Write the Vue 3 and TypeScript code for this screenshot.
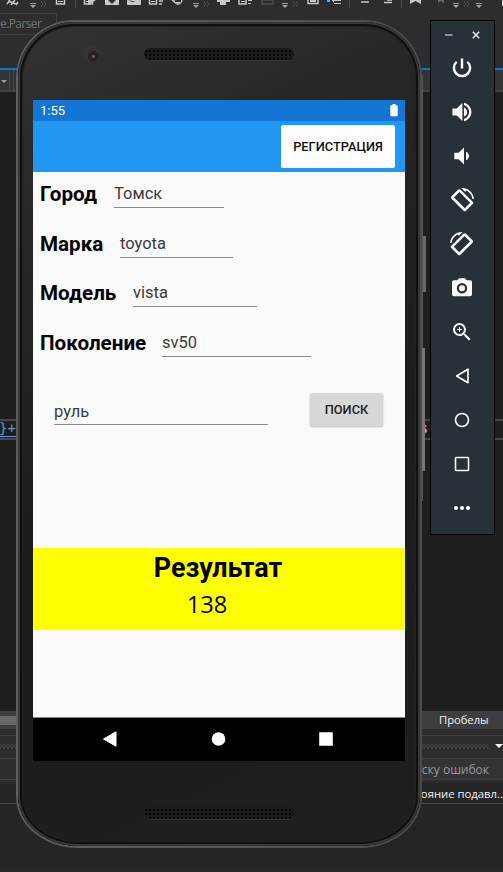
<script setup lang="ts">
interface Field {
  label: string
  value: string
  gap: number
  width: number
}

interface Tool {
  name: string
  kind: 'fill' | 'line'
  d: string
  flip?: boolean
}

const fields: Field[] = [
  { label: 'Город', value: 'Томск', gap: 114, width: 110 },
  { label: 'Марка', value: 'toyota', gap: 120, width: 113 },
  { label: 'Модель', value: 'vista', gap: 133, width: 124 },
  { label: 'Поколение', value: 'sv50', gap: 162, width: 149 },
]

const rotate =
  'M16.48 2.52c3.27 1.55 5.61 4.72 5.97 8.48h1.5C23.44 4.84 18.29 0 12 0l-.66.03 3.81 3.81 1.33-1.32zM10.6 1.75c-.8-.8-1.9-.8-2.6 0L1.5 8.3c-.7.7-.7 1.7 0 2.4l12 12c.7.7 1.8.7 2.5 0l6.7-6.7c.7-.7.7-1.6 0-2.3zM14.8 20.2L4 9.4l5.4-5.4 10.8 10.8z'

const tools: Tool[] = [
  { name: 'power', kind: 'fill', d: 'M13.2 2.6h-2.4v10h2.4zM18 4.9l-1.6 1.6A6.9 6.9 0 1 1 7.6 6.5L6 4.9a9.3 9.3 0 1 0 12 0z' },
  { name: 'volume-up', kind: 'fill', d: 'M2.4 8.5v7h4.4l5.6 5.6V2.9L6.8 8.5zM17.2 12c0-1.9-1.1-3.6-3.2-4.6v9.2c2.1-1 3.2-2.7 3.2-4.6zM14 2.8v2.3c3 .9 5.1 3.6 5.1 6.9s-2.1 6-5.1 6.9v2.3c4.2-1 7.4-4.7 7.4-9.2S18.2 3.8 14 2.8z' },
  { name: 'volume-down', kind: 'fill', d: 'M4.3 8.8v6.4h4.3l5.4 5.4V3.4L8.6 8.8zM19 12c0-1.8-1-3.3-3-4.2v8.4c2-.9 3-2.4 3-4.2z' },
  { name: 'rotate-left', kind: 'fill', d: rotate },
  { name: 'rotate-right', kind: 'fill', d: rotate, flip: true },
  { name: 'camera', kind: 'fill', d: 'M9 2.2L7.2 4.2H4c-1.1 0-2 .9-2 2v12c0 1.1.9 2 2 2h16c1.1 0 2-.9 2-2v-12c0-1.1-.9-2-2-2h-3.2L15 2.2zm3 15.2a5.2 5.2 0 1 1 0-10.4 5.2 5.2 0 0 1 0 10.4zm0-2.2a3 3 0 1 0 0-6 3 3 0 0 0 0 6z' },
  { name: 'zoom', kind: 'fill', d: 'M15.5 14h-.79l-.28-.27A6.471 6.471 0 0 0 16 9.5 6.5 6.5 0 1 0 9.5 16c1.61 0 3.09-.59 4.23-1.57l.27.28v.79l5 4.99L20.49 19zm-6 0C7.01 14 5 11.99 5 9.5S7.01 5 9.5 5 14 7.01 14 9.5 11.99 14 9.5 14zm2.5-4h-2v2H9v-2H7V9h2V7h1v2h2z' },
  { name: 'back', kind: 'line', d: 'M18 5.2v13.6L6.6 12z' },
  { name: 'home', kind: 'line', d: 'M12 5.5a6.5 6.5 0 1 0 0 13 6.5 6.5 0 0 0 0-13z' },
  { name: 'overview', kind: 'line', d: 'M6.3 5.5h11.4q.8 0 .8.8v11.4q0 .8-.8.8H6.3q-.8 0-.8-.8V6.3q0-.8.8-.8z' },
  { name: 'more', kind: 'fill', d: 'M6 10a2 2 0 1 0 0 4 2 2 0 0 0 0-4zM12 10a2 2 0 1 0 0 4 2 2 0 0 0 0-4zM18 10a2 2 0 1 0 0 4 2 2 0 0 0 0-4z' },
]
</script>

<template>
  <div class="desktop">
    <div class="ide">
      <div class="ide-top">
        <svg class="ide-icons" width="503" height="10" viewBox="0 0 503 10">
          <g fill="none" stroke="#c8c8c8" stroke-width="1.5">
            <path d="M7 4l3-4M11 5l4-5M16 5l2-3M8 1l8 3M56.5 0v4h8V0M84.5 0v4h8V0M149.5 0v4h7V0M159 1h4M159 4h3M239 0v4h7V0M308 0v3.5h10V0M333 1.5h1M361 2h8M387 0h5M384 2.5h8" />
            <path d="M172 0q5 5 10 1" />
          </g>
          <g fill="#c8c8c8">
            <path d="M58 1h5v1h-5zM86 1h5v1h-5zM151 1h4v1h-4zM241 1h4v1h-4zM310 0h6v2h-6zM248 0h4v1h-4zM248 3h3v1h-3z" />
            <path d="M88 5V0h8zM105 0h14v5h-14zM127 0h14v5h-14zM217 0h13v2h-4v3h-6V2h-3zM410 0h11v4l-5.5-3-5.5 3z" />
            <path d="M173 0h10q-2 5-5 5t-5-5z" opacity=".7" />
          </g>
          <path d="M108 0h8l-4 4zM128 0l4 2h4M175 0h6v2h-6z" fill="#2d2d30" />
          <g fill="#a0a0a0">
            <path d="M30 3h6v1h-6zM30 5h6l-3 3zM193 3h6v1h-6zM193 5h6l-3 3zM282 3h6v1h-6zM282 5h6l-3 3zM453 3h6v1h-6zM453 5h6l-3 3zM476 3h6v1h-6zM476 5h6l-3 3z" />
          </g>
          <path d="M262 0h11v4h-11z" fill="none" stroke="#5c5c60" />
          <path d="M438 0h6v3l-3-2-3 2z" fill="#68686c" />
          <path d="M75.5 0v8M349.5 0v8M401.5 0v8" stroke="#4a4a4f" />
          <path d="M327 0h3v2h-3z" fill="#55aaff" />
          <path d="M332 0h9v1h-9zM334 3h7v1h-7zM502 0h1v6h-1z" fill="#c8c8c8" />
          <path d="M41 2h5M42 4h5M41 6h5M204 2h5M205 4h5M204 6h5M293 2h5M294 4h5M293 6h5M464 2h5M465 4h5M464 6h5" stroke="#68686c" stroke-dasharray="1 2" />
        </svg>
        <div class="tab">e.Parser</div>
      </div>
      <div class="ide-nav"><span class="combo"><i class="caret"></i></span><span class="combo"></span></div>
      <div class="editor">
        <div class="code-line"><span>}+</span><b>s</b></div>
      </div>
      <div class="scroll-row"><div class="thumb"></div><span>Пробелы</span></div>
      <div class="panel-head"><div class="dots"></div><i class="caret bright"></i></div>
      <div class="panel-search">Поиск по списку ошибок</div>
      <div class="panel-cols">Состояние подавл..</div>
      <div class="ide-bottom"></div>
    </div>

    <div class="side-key long"></div>
    <div class="side-key power-key"></div>
    <div class="side-key volume-key"></div>
    <div class="phone">
      <div class="face">
        <div class="head">
          <div class="lens"></div>
          <div class="speaker"></div>
        </div>
        <div class="screen">
          <div class="status">
            <span>1:55</span>
            <svg width="8" height="13" viewBox="0 0 8 13"><path d="M2.5 0h3v1.3h1.2q1 0 1 1v9q0 1-1 1H1.3q-1 0-1-1v-9q0-1 1-1h1.2z" fill="#fff" /></svg>
          </div>
          <div class="appbar"><button class="register">РЕГИСТРАЦИЯ</button></div>
          <div class="page">
            <div v-for="f in fields" :key="f.label" class="field">
              <label :style="{ width: f.gap - 40 + 'px' }">{{ f.label }}</label>
              <div class="input" :style="{ width: f.width + 'px' }">{{ f.value }}</div>
            </div>
            <div class="search">
              <div class="input wide">руль</div>
              <button class="find">ПОИСК</button>
            </div>
            <div class="result">
              <h2>Результат</h2>
              <p>138</p>
            </div>
          </div>
          <div class="navbar">
            <svg width="16" height="16" viewBox="0 0 16 16"><path d="M14 .8v14.4L1.5 8z" fill="#fff" stroke="#fff" stroke-linejoin="round" /></svg>
            <svg width="16" height="16" viewBox="0 0 16 16"><circle cx="8.5" cy="8" r="6.8" fill="#fff" /></svg>
            <svg width="16" height="16" viewBox="0 0 16 16"><rect x="1.2" y="1.2" width="13.6" height="13.6" rx=".6" fill="#fff" /></svg>
          </div>
        </div>
        <div class="foot"><div class="speaker"></div></div>
      </div>
    </div>

    <div class="emulator">
      <div class="window-keys">
        <svg width="8" height="10" viewBox="0 0 8 10"><path d="M0 5h7.5" stroke="#a3adb2" stroke-width="1.6" /></svg>
        <svg width="8" height="10" viewBox="0 0 8 10"><path d="M.8 1.8l6.4 6.4M7.2 1.8L.8 8.2" stroke="#e6e9ea" stroke-width="1.5" /></svg>
      </div>
      <div v-for="t in tools" :key="t.name" class="tool">
        <svg width="24" height="24" viewBox="0 0 24 24" :class="[t.kind, { flip: t.flip }]"><path :d="t.d" fill-rule="evenodd" /></svg>
      </div>
    </div>
  </div>
</template>

<style>
body {
  margin: 0;
  background: #252526;
}
</style>

<style scoped>
.desktop {
  position: relative;
  width: 503px;
  height: 872px;
  overflow: hidden;
  font-family: Roboto, sans-serif;
}
.desktop * {
  box-sizing: border-box;
}
.ide {
  display: flex;
  flex-direction: column;
  height: 872px;
  background: #252526;
  font-family: "Open Sans", sans-serif;
  font-size: 12px;
  color: #f1f1f1;
}
.ide-top {
  height: 70px;
  background: #2d2d30;
  border-bottom: 2px solid #007acc;
}
.ide-icons {
  display: block;
}
.tab {
  width: 57px;
  height: 22px;
  margin-top: 3px;
  border: 1px solid #3f3f46;
  border-left: 0;
  color: #6e7472;
  font-size: 12px;
  letter-spacing: -0.6px;
  line-height: 20px;
}
.ide-nav {
  display: flex;
  gap: 3px;
  height: 22px;
  background: #333337;
  border-bottom: 2px solid #3f3f46;
}
.combo {
  width: 10px;
  border-right: 1px solid #46464c;
  padding: 10px 0 0 1px;
}
.combo + .combo {
  border: 0;
  border-left: 1px solid #46464c;
}
.caret {
  display: block;
  border: 3px solid transparent;
  border-top-color: #999;
  border-bottom: 0;
  width: 6px;
}
.editor {
  height: 619px;
  background: #1e1e1e;
  padding-top: 327px;
}
.code-line {
  display: flex;
  justify-content: space-between;
  height: 21px;
  padding-right: 75px;
  border: solid #464646;
  border-width: 2px 0;
  font-family: "DejaVu Sans Mono", monospace;
  font-size: 14px;
  line-height: 15px;
  color: #569cd6;
}
.code-line span {
  height: 16px;
  border-bottom: 1px solid #569cd6;
  margin-left: -1px;
}
.code-line b {
  color: #d69d85;
}
.scroll-row {
  display: flex;
  align-items: center;
  height: 18px;
  background: #3e3e42;
}
.scroll-row span {
  margin-top: -2px;
  font-size: 11.2px;
}
.thumb {
  width: 200px;
  height: 9px;
  background: #686868;
  margin-right: 239px;
}
.panel-head {
  display: flex;
  justify-content: space-between;
  height: 30px;
  border-bottom: 1px solid #3f3f46;
  padding: 15px 0 0;
  background: linear-gradient(#3f3f46, #3f3f46) 0 6px / 100% 1px no-repeat #2d2d30;
}
.dots {
  width: 488px;
  height: 5px;
  background:
    radial-gradient(circle, #515155 0.6px, transparent 0.9px) 0 0 / 4px 4px,
    radial-gradient(circle, #515155 0.6px, transparent 0.9px) 2px 2px / 4px 4px;
}
.caret.bright {
  border-width: 4px;
  border-bottom: 0;
  border-top-color: #f1f1f1;
  width: 8px;
}
.panel-search {
  height: 21px;
  background: linear-gradient(90deg, #2d2d30 50%, #333337 50%);
  border-bottom: 1px solid #3f3f46;
  color: #999;
  line-height: 21px;
  padding-right: 14px;
  text-align: right;
}
.panel-cols {
  height: 24px;
  background: linear-gradient(#2d2d30 3px, #252526 3px);
  border-bottom: 1px solid #46464c;
  line-height: 27px;
  text-align: right;
  font-size: 11.3px;
  white-space: nowrap;
}
.ide-bottom {
  flex: 1;
  background: #252526;
  border-bottom: 4px solid #2d2526;
}
.phone {
  position: absolute;
  left: 16px;
  top: 20px;
  width: 406px;
  height: 828px;
  padding: 2px;
  border-radius: 58px 58px 62px 62px / 58px 58px 52px 52px;
  background: linear-gradient(90deg, #625c5e, #4c4a4b);
}
.face {
  height: 824px;
  display: flex;
  flex-direction: column;
  align-items: center;
  border-radius: 56px 56px 60px 60px / 56px 56px 50px 50px;
  background: linear-gradient(155deg, #343434 0%, #272727 20%, #1c1c1c 55%, #1f1f1f 100%);
  box-shadow: inset 0 0 0 2px #383737, inset 0 0 0 4px #101010, inset 0 0 1px 5px #232323;
}
.head {
  display: flex;
  align-items: center;
  width: 372px;
  height: 78px;
  padding-bottom: 14px;
}
.lens {
  width: 16px;
  height: 16px;
  margin-left: 50px;
  border-radius: 50%;
  background: radial-gradient(circle at 65% 65%, #70585f 0 1px, #252027 2px 5px, #343434 6px);
}
.speaker {
  width: 150px;
  height: 13px;
  margin-left: 45px;
  border-radius: 7px;
  border-bottom: 1px solid #333;
  background: radial-gradient(circle, #050505 0.9px, transparent 1.2px) 0 1px / 4px 4px #1b1b1b;
}
.foot {
  flex: 1;
  width: 372px;
  padding-top: 46px;
}
.foot .speaker {
  margin-left: 111px;
}
.screen {
  width: 372px;
  height: 661px;
  background: #fafafa;
  color: #000;
}
.status {
  display: flex;
  align-items: center;
  justify-content: space-between;
  height: 21px;
  padding: 0 7px;
  background: #1476d4;
  color: #fff;
  font-size: 13px;
}
.appbar {
  display: flex;
  justify-content: flex-end;
  height: 51px;
  padding: 4px 10px 0 0;
  background: #2196f3;
}
.register {
  width: 114px;
  height: 43px;
  padding: 0;
  border: 0;
  border-radius: 2px;
  background: #fff;
  color: #111;
  font: 500 12.8px Roboto, sans-serif;
}
.page {
  display: flex;
  flex-direction: column;
  height: 546px;
  border-bottom: 1px solid #858585;
}
.field {
  display: flex;
  height: 49.6px;
  padding: 8px 0 0 7px;
}
.field label {
  font-weight: 700;
  font-size: 20.65px;
  line-height: 28px;
}
.input {
  height: 28px;
  border-bottom: 1px solid #8b8b8b;
  font-size: 16.5px;
  line-height: 28px;
  color: #3a3a3a;
}
.search {
  display: flex;
  justify-content: space-between;
  padding: 23px 22px 0 21px;
}
.input.wide {
  width: 214px;
  height: 30px;
  line-height: 33px;
  margin-top: 1.6px;
}
.find {
  width: 73px;
  height: 33px;
  border: 0;
  padding: 0;
  border-radius: 2px;
  background: #d6d7d7;
  color: #222;
  box-shadow: 0 1px 2px #0004;
  font: 500 12.8px Roboto, sans-serif;
}
.result {
  height: 82.5px;
  margin-top: auto;
  margin-bottom: 87px;
  background: #ff0;
  text-align: center;
}
.result h2 {
  margin: 0;
  padding-right: 2px;
  font-size: 26.9px;
  line-height: 40px;
}
.result p {
  margin: 0;
  padding-right: 24px;
  font: 23.7px/32px "Open Sans", sans-serif;
}
.navbar {
  display: flex;
  justify-content: space-between;
  align-items: center;
  height: 43px;
  padding: 0 71px 1px 69px;
  background: #000;
}
.side-key {
  position: absolute;
  background: #686868;
}
.long {
  left: 421px;
  top: 75px;
  width: 2px;
  height: 426px;
  background: #555;
}
.power-key {
  left: 423px;
  top: 236px;
  width: 3px;
  height: 56px;
}
.volume-key {
  left: 422px;
  top: 348px;
  width: 3px;
  height: 123px;
  background: #777;
}
.emulator {
  position: absolute;
  left: 430px;
  top: 20px;
  width: 65px;
  height: 515px;
  border: 1px solid #000;
  background: #263238;
}
.window-keys {
  display: flex;
  justify-content: space-between;
  height: 25px;
  padding: 9px 14px 0;
}
.tool {
  display: flex;
  justify-content: center;
  align-items: center;
  height: 44px;
  padding-right: 1px;
}
.tool svg {
  display: block;
}
.fill {
  fill: #fff;
}
.line {
  fill: none;
  stroke: #fff;
  stroke-width: 1.6;
  stroke-linejoin: round;
}
.flip {
  transform: scaleX(-1);
}
</style>
